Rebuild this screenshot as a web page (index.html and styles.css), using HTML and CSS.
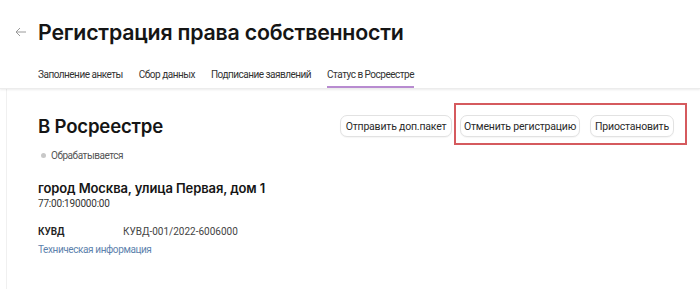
FILE: index.html
```html
<!DOCTYPE html>
<html lang="ru">
<head>
<meta charset="utf-8">
<link rel="stylesheet" href="styles.css">
</head>
<body>
<header class="header">
  <div class="title-row">
    <svg class="back" width="12" height="10" viewBox="0 0 12 10"><path d="M11 5H1.5M5 1L1 5l4 4" fill="none" stroke="#9a9a9a" stroke-width="1"/></svg>
    <h1 class="title">Регистрация права собственности</h1>
  </div>
  <nav class="tabs">
    <span class="tab">Заполнение анкеты</span>
    <span class="tab">Сбор данных</span>
    <span class="tab">Подписание заявлений</span>
    <span class="tab active">Статус в Росреестре</span>
  </nav>
</header>
<main class="card">
  <div class="top">
    <div class="left">
      <h2 class="subtitle">В Росреестре</h2>
      <div class="status"><span class="dot"></span>Обрабатывается</div>
    </div>
    <div class="actions">
      <button class="btn b1">Отправить доп.пакет</button>
      <div class="highlight">
        <button class="btn b2">Отменить регистрацию</button>
        <button class="btn b3">Приостановить</button>
      </div>
    </div>
  </div>
  <div class="address">город Москва, улица Первая, дом 1</div>
  <div class="cadastre">77:00:190000:00</div>
  <div class="kv">
    <span class="key">КУВД</span>
    <span class="value">КУВД-001/2022-6006000</span>
  </div>
  <a class="link">Техническая информация</a>
</main>
</body>
</html>
```
FILE: styles.css
```css
* { box-sizing: border-box; }
html, body { margin: 0; background: #fff; }
body {
  font-family: Roboto, "Noto Sans", sans-serif;
  color: #1a1a1a;
  width: 700px;
  height: 289px;
  overflow: hidden;
}
.header {
  background: #fff;
  box-shadow: 0 1px 2px rgba(0,0,0,0.08);
  border-bottom: 1px solid #ececec;
  position: relative;
  z-index: 1;
}
.title-row {
  display: flex;
  align-items: center;
  padding: 14px 0 0 15px;
  height: 50px;
}
.back { margin-right: 11px; }
.title {
  margin: 0;
  font-family: Inter, sans-serif;
  font-size: 21.3px;
  font-weight: 600;
  letter-spacing: -0.2px;
  color: #151515;
}
.tabs {
  display: flex;
  gap: 16px;
  padding: 19px 0 0 38px;
  height: 38px;
}
.tab {
  font-size: 10px;
  color: #333;
  letter-spacing: -0.5px;
  height: 19px;
}
.tab.active {
  border-bottom: 2px solid #b88bd0;
}
.card {
  margin-left: 6px;
  border-left: 1px solid #f0f0f0;
  padding: 14px 0 0 31px;
  height: 200px;
}
.top {
  display: flex;
  justify-content: space-between;
}
.subtitle {
  margin: 12px 0 0;
  font-family: Inter, sans-serif;
  font-size: 18.6px;
  font-weight: 600;
  color: #151515;
  letter-spacing: -0.2px;
}
.status {
  display: flex;
  align-items: center;
  margin-top: 13px;
  font-size: 10px;
  color: #555;
  letter-spacing: -0.45px;
}
.dot {
  width: 5px;
  height: 5px;
  border-radius: 50%;
  background: #c8c8c8;
  margin: 0 5px 0 3px;
}
.actions {
  display: flex;
  align-items: flex-start;
  gap: 2px;
  margin-right: 13px;
}
.highlight {
  display: flex;
  gap: 10px;
  border: 2px solid #d55a5e;
  padding: 10px 11px 6px 4px;
  height: 42px;
}
.btn {
  font-family: inherit;
  font-size: 10.5px;
  color: #2a2a2a;
  background: #fff;
  border: 1px solid #e2e2e2;
  border-radius: 7px;
  height: 22px;
  padding: 0;
  white-space: nowrap;
  letter-spacing: -0.2px;
  box-shadow: 0 1px 1px rgba(0,0,0,0.04);
}
.b1 { margin-top: 12px; width: 112px; }
.b2 { width: 120px; }
.b3 { width: 84px; }
.address {
  margin-top: 19px;
  font-family: Inter, sans-serif;
  font-size: 13px;
  font-weight: 600;
  color: #151515;
  letter-spacing: -0.1px;
}
.cadastre {
  font-size: 10px;
  color: #333;
  margin-top: 2px;
  letter-spacing: -0.2px;
}
.kv {
  display: flex;
  margin-top: 17px;
  font-size: 10px;
}
.key { width: 85px; font-weight: 600; color: #222; }
.value { color: #444; }
.link {
  display: block;
  margin-top: 7px;
  font-size: 10px;
  color: #5d82ad;
  letter-spacing: -0.4px;
}
```
